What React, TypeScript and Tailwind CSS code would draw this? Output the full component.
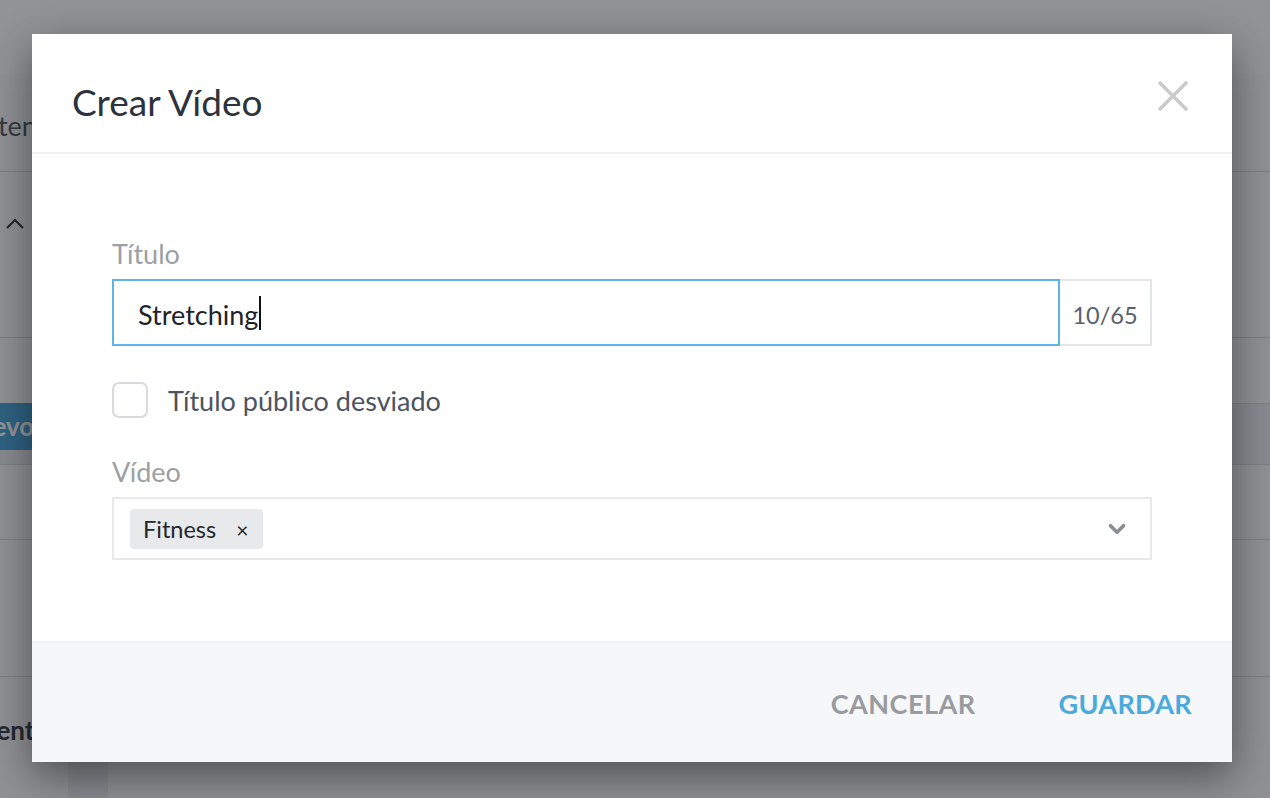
import { ChevronDown } from "lucide-react";

const BackgroundPage = () => {
  return (
    <div className="flex h-full w-full flex-col bg-[#f4f5f7]">
      <div className="h-[74px] w-full bg-white" />
      {/* header row */}
      <div className="flex h-[98px] w-full items-center border-b border-[#d5d8dc] bg-[#fbfbfc] pt-[8px]">
        <span className="-ml-[50px] text-[27px] text-[#4b5058]">Contenido</span>
      </div>
      <div className="flex h-[166px] w-full items-start border-b border-[#d5d8dc] bg-[#fbfbfc] pl-[5px] pt-[44px]">
        <svg width="20" height="14" viewBox="0 0 20 14" fill="none">
          <path d="M2 12 L10 4 L18 12" stroke="#2b2f36" strokeWidth="2.2" />
        </svg>
      </div>
      <div className="h-[66px] w-full border-b border-[#d5d8dc] bg-[#fbfbfc]" />
      <div className="flex h-[61px] w-full items-start border-b border-[#d5d8dc] bg-[#eceef1]">
        <div className="-ml-[52px] mt-[-1px] flex h-[47px] w-[140px] items-center rounded bg-[#3e9fd8] pl-[10px] text-[26px] font-bold text-white">
          Nuevo
        </div>
      </div>
      <div className="h-[75px] w-full border-b border-[#d5d8dc] bg-[#fbfbfc]" />
      <div className="h-[137px] w-full border-b border-[#d5d8dc] bg-[#fbfbfc]" />
      <div className="flex flex-1 w-full bg-[#fbfbfc]">
        <div className="flex w-[68px] items-start pt-[34px]">
          <span className="-ml-[69px] text-[26px] font-bold text-[#2b2f36]">Pendientes</span>
        </div>
        <div className="w-[40px] bg-[#eceef1]" />
        <div className="flex-1" />
      </div>
    </div>
  );
};

export default function App() {
  return (
    <div className="relative h-[798px] w-full overflow-hidden font-['Lato',sans-serif]">
      <BackgroundPage />
      <div className="absolute inset-0 bg-[rgba(30,34,40,0.49)]" />
      <div className="absolute inset-0 pl-[32px] pt-[34px]">
        <div className="flex h-[728px] w-[1200px] flex-col bg-white shadow-[0_14px_40px_rgba(0,0,0,0.45)]">
          {/* header */}
          <div className="flex h-[120px] shrink-0 items-start justify-between border-b-2 border-[#f0f1f3] pl-[40px] pr-[43px] pt-[46px]">
            <h2 className="text-[37px] leading-[44px] text-[#2c333c]">Crear Vídeo</h2>
            <button>
              <svg width="32" height="32" viewBox="0 0 32 32" fill="none">
                <path d="M2 2 L30 30 M30 2 L2 30" stroke="#cacaca" strokeWidth="3.6" />
              </svg>
            </button>
          </div>

          {/* body */}
          <div className="flex flex-1 flex-col px-[80px] pt-[85px]">
            <label className="text-[27px] leading-[30px] text-[#9c9fa4]">Título</label>
            <div className="mt-[10px] flex h-[67px]">
              <div className="flex flex-1 items-center border-2 border-[#5cb5e4] pl-[24px] pt-[5px] text-[27px] text-[#1f2329]">
                Stretching
                <span className="ml-[1px] -mt-[4px] inline-block h-[34px] w-[2px] bg-[#111]" />
              </div>
              <div className="flex w-[92px] items-center justify-center border-2 border-l-0 border-[#e2e6e9] pt-[6px] text-[23.5px] text-[#5a6069]">
                10/65
              </div>
            </div>

            <div className="mt-[36px] flex h-[36px] items-center gap-[20px]">
              <div className="h-[36px] w-[36px] rounded-[7px] border-2 border-[#d8dadd] bg-white" />
              <span className="pt-[2px] text-[27px] leading-[36px] text-[#4c5460]">Título público desviado</span>
            </div>

            <label className="mt-[39px] text-[27px] leading-[30px] text-[#9c9fa4]">Vídeo</label>
            <div className="mt-[10px] flex h-[63px] items-center justify-between border-2 border-[#e8e8e8] pl-[16px] pr-[20px]">
              <div className="flex h-[40px] items-center gap-[20px] rounded-[4px] bg-[#e8e9eb] pl-[13px] pr-[15px] pt-[3px] text-[23.5px] text-[#23282e]">
                <span>Fitness</span>
                <span className="text-[21px]">×</span>
              </div>
              <ChevronDown size={26} strokeWidth={3.4} className="text-[#8a8d92]" />
            </div>
          </div>

          {/* footer */}
          <div className="flex h-[121px] shrink-0 items-center justify-end gap-[83px] border-t-2 border-[#f0f1f3] bg-[#f6f7f9] pr-[40px] pt-[4px]">
            <button className="text-[27px] font-bold tracking-[0.5px] text-[#9a9b9f]">CANCELAR</button>
            <button className="text-[27px] font-bold tracking-[0.3px] text-[#4aa9dd]">GUARDAR</button>
          </div>
        </div>
      </div>
    </div>
  );
}
